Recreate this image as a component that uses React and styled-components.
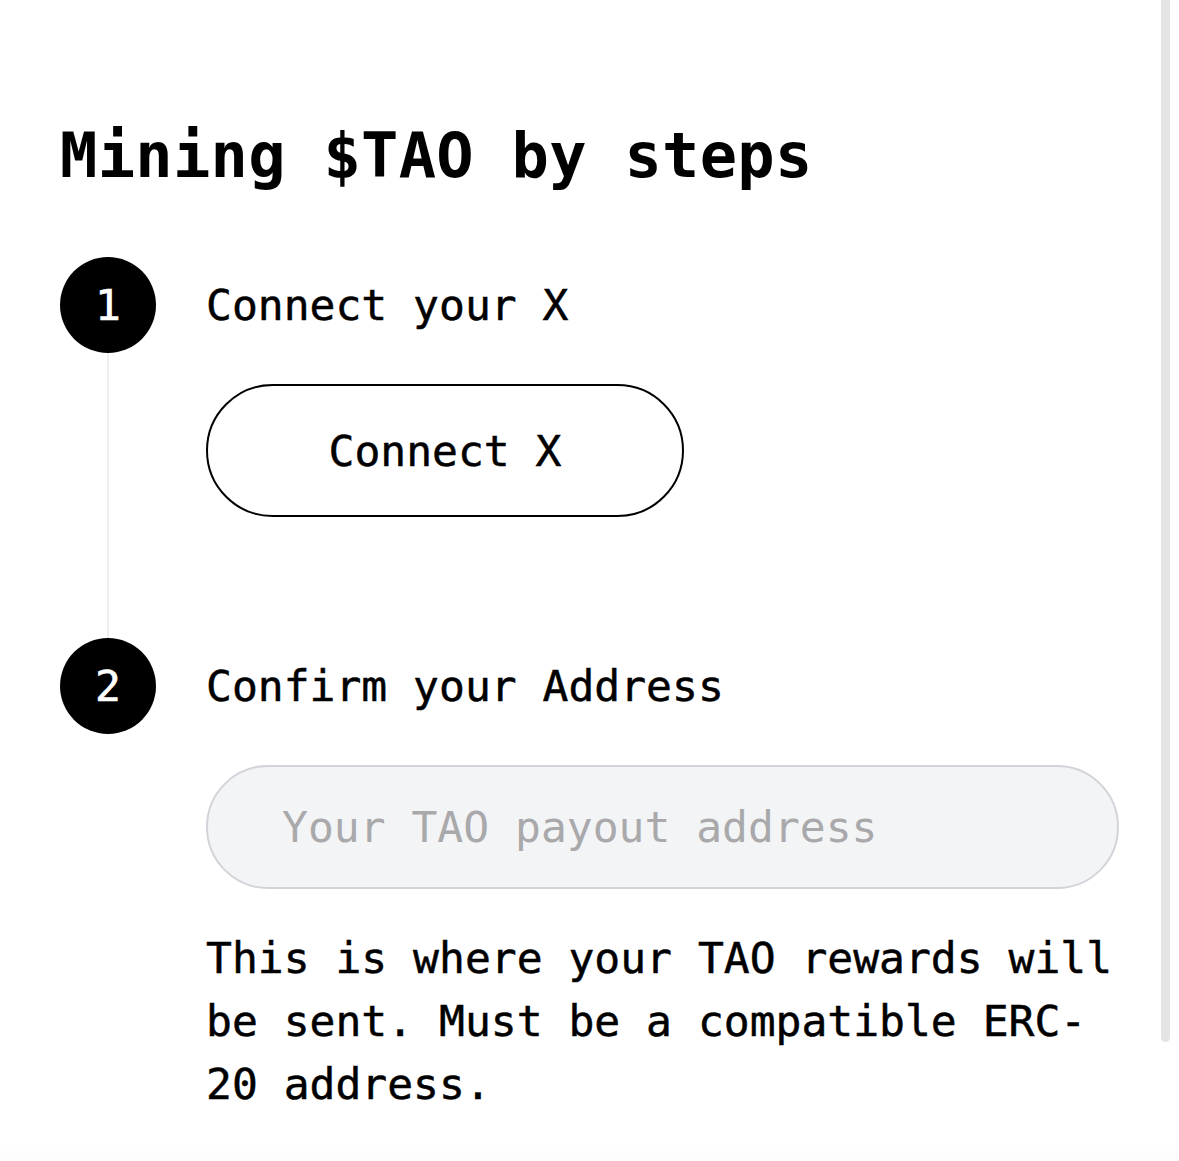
import React from 'react';
import styled, { createGlobalStyle } from 'styled-components';

const GlobalStyle = createGlobalStyle`
  html, body {
    margin: 0;
    padding: 0;
    background: #ffffff;
  }
  body {
    font-family: "DejaVu Sans Mono", "Liberation Mono", monospace;
    color: #000;
  }
  * {
    box-sizing: border-box;
  }
`;

const Page = styled.div`
  position: relative;
  width: 1179px;
  min-height: 1161px;
  padding: 125px 0 0 60px;
  background: linear-gradient(to bottom, #fff 0, #fff 1140px, #fcfcfc 1161px);
`;

const Title = styled.h1`
  margin: 0 0 70px;
  font-size: 62px;
  line-height: 62px;
  font-weight: 700;
  letter-spacing: 0.3px;
`;

const Steps = styled.div`
  display: flex;
  flex-direction: column;
`;

const Step = styled.div`
  display: grid;
  grid-template-columns: 96px 1fr;
  column-gap: 50px;
`;

const Rail = styled.div`
  display: flex;
  flex-direction: column;
  align-items: center;
`;

const Circle = styled.div`
  width: 96px;
  height: 96px;
  border-radius: 50%;
  background: #000;
  color: #fff;
  display: flex;
  align-items: center;
  justify-content: center;
  font-size: 43px;
  -webkit-text-stroke: 0.6px #fff;
  flex-shrink: 0;
`;

const Line = styled.div`
  flex: 1;
  width: 2px;
  background: #eeeeee;
`;

const Body = styled.div`
  display: flex;
  flex-direction: column;
  align-items: flex-start;
  padding-bottom: ${(props) => (props.last ? '0' : '121px')};
`;

const Label = styled.div`
  height: 96px;
  display: flex;
  align-items: center;
  font-size: 43px;
  -webkit-text-stroke: 0.5px #000;
  white-space: nowrap;
`;

const ConnectButton = styled.button`
  margin-top: 31px;
  width: 478px;
  height: 133px;
  border: 2.5px solid #000;
  border-radius: 999px;
  background: #fff;
  color: #000;
  font-family: inherit;
  font-size: 43px;
  -webkit-text-stroke: 0.5px #000;
  padding: 0;
  cursor: pointer;
`;

const AddressInput = styled.input`
  margin-top: 31px;
  width: 913px;
  height: 124px;
  border: 2px solid #d3d3da;
  border-radius: 999px;
  background: #f3f4f6;
  padding: 0 0 0 74px;
  font-family: inherit;
  font-size: 43px;
  color: #000;
  outline: none;
  &::placeholder {
    color: #a9a9ab;
  }
`;

const Hint = styled.p`
  margin: 38px 0 0;
  width: 913px;
  font-size: 43px;
  line-height: 63px;
  -webkit-text-stroke: 0.5px #000;
`;

const ScrollThumb = styled.div`
  position: absolute;
  top: 0;
  left: 1161px;
  width: 9px;
  height: 1042px;
  background: #e4e4e4;
  border-radius: 0 0 5px 5px;
`;

export default function App() {
  return (
    <>
      <GlobalStyle />
      <Page>
        <Title>Mining $TAO by steps</Title>
        <Steps>
          <Step>
            <Rail>
              <Circle>1</Circle>
              <Line />
            </Rail>
            <Body>
              <Label>Connect your X</Label>
              <ConnectButton>Connect X</ConnectButton>
            </Body>
          </Step>
          <Step>
            <Rail>
              <Circle>2</Circle>
            </Rail>
            <Body last>
              <Label>Confirm your Address</Label>
              <AddressInput placeholder="Your TAO payout address" />
              <Hint>
                This is where your TAO rewards will be sent. Must be a compatible ERC-<wbr />20 address.
              </Hint>
            </Body>
          </Step>
        </Steps>
        <ScrollThumb />
      </Page>
    </>
  );
}
